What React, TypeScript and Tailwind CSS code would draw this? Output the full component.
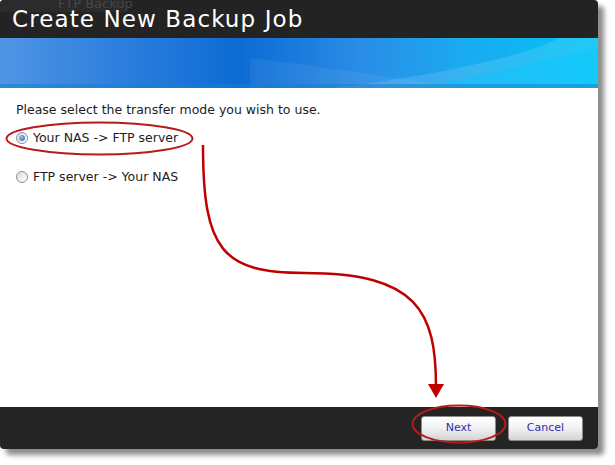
import React from "react";

function Radio({ checked }: { checked: boolean }) {
  return (
    <span className="relative inline-flex h-[12px] w-[12px] shrink-0 items-center justify-center rounded-full border border-[#8e8f8f] bg-gradient-to-br from-[#dcdcdc] to-[#ffffff]">
      {checked && (
        <span className="h-[6px] w-[6px] rounded-full bg-[radial-gradient(circle_at_35%_35%,#9cc3f0,#2a5fb0)]" />
      )}
    </span>
  );
}

function Button({ label }: { label: string }) {
  return (
    <button className="flex h-[25px] w-[75px] items-center justify-center rounded-[3px] border border-[#8a8a8a] bg-gradient-to-b from-[#ffffff] via-[#f1f1f1] to-[#d4d4d4] text-[11px] text-[#2c2cb4] [font-family:'DejaVu_Sans',sans-serif]">
      {label}
    </button>
  );
}

export default function App() {
  return (
    <div className="relative h-[465px] w-[615px] overflow-hidden bg-white">
      <div className="flex w-[598px] flex-col overflow-hidden rounded-[4px] shadow-[6px_6px_5px_rgba(0,0,0,0.45)]">
        {/* title bar */}
        <div className="relative flex h-[38px] items-center bg-[#232323] pl-[12px]">
          <div className="absolute left-0 top-0 h-[12px] w-[125px] bg-[#2b2b2b]" />
          <div className="absolute left-[58px] top-[-6px] text-[13px] text-[#474747] [font-family:'DejaVu_Sans',sans-serif]">
            FTP Backup
          </div>
          <div className="relative pt-[1px] text-[23px] leading-none tracking-[1.1px] text-white [font-family:'DejaVu_Sans',sans-serif]">
            Create New Backup Job
          </div>
        </div>
        {/* banner */}
        <div className="relative h-[50px] overflow-hidden bg-[linear-gradient(90deg,#4f95e4_0%,#2a7ddd_22%,#0d6bd4_40%,#2a8ce6_60%,#1aabf0_78%,#00c4f7_100%)]">
          <svg className="absolute inset-0" width="598" height="50" viewBox="0 0 598 50">
            <path d="M330 50 C420 40 520 20 560 0 L598 0 L598 50 Z" fill="#ffffff" opacity="0.12" />
            <path d="M420 50 C480 38 540 22 598 10 L598 50 Z" fill="#00c8ff" opacity="0.35" />
            <path d="M250 20 C330 30 400 40 460 50 L250 50 Z" fill="#ffffff" opacity="0.06" />
            <rect x="0" y="46" width="598" height="4" fill="#1a7fc8" opacity="0.55" />
          </svg>
        </div>
        {/* content */}
        <div className="flex h-[319px] flex-col bg-white pl-[16px] pt-[14px] text-[12.5px] text-[#1c1c1c] [font-family:'DejaVu_Sans',sans-serif]">
          <div className="leading-[16px]">Please select the transfer mode you wish to use.</div>
          <label className="mt-[12px] flex items-center gap-[5px] leading-[16px]">
            <Radio checked />
            <span>Your NAS -&gt; FTP server</span>
          </label>
          <label className="mt-[23px] flex items-center gap-[5px] leading-[16px]">
            <Radio checked={false} />
            <span>FTP server -&gt; Your NAS</span>
          </label>
        </div>
        {/* footer */}
        <div className="flex h-[42px] items-center justify-end gap-[12px] bg-[#242424] pr-[15px]">
          <Button label="Next" />
          <Button label="Cancel" />
        </div>
      </div>

      {/* annotations */}
      <svg className="pointer-events-none absolute left-0 top-0" width="615" height="465" viewBox="0 0 615 465">
        <ellipse cx="99.5" cy="138.5" rx="93" ry="16" fill="none" stroke="#b71c1c" strokeWidth="2" />
        <ellipse cx="459" cy="424" rx="46.5" ry="18.5" fill="none" stroke="#b71c1c" strokeWidth="2" />
        <path
          d="M203 145 C203 250 222 273 305 273 C418 273 436 312 436 387"
          fill="none"
          stroke="#c00000"
          strokeWidth="2.5"
        />
        <polygon points="428,384 444,384 436,398" fill="#c00000" />
      </svg>
    </div>
  );
}
